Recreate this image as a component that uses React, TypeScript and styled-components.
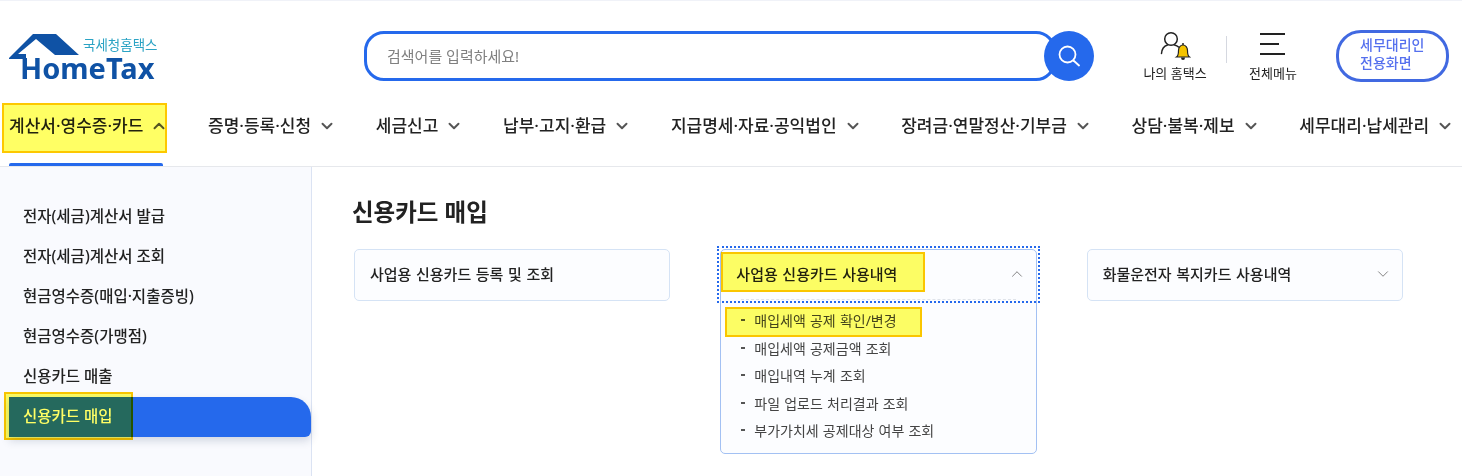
import React from 'react';
import styled, { createGlobalStyle } from 'styled-components';
import { ChevronDown, ChevronUp } from 'lucide-react';

const GlobalStyle = createGlobalStyle`
  html, body {
    margin: 0;
    padding: 0;
    background: #fff;
    overflow: hidden;
  }
  * {
    box-sizing: border-box;
  }
  body {
    font-family: "Noto Sans", "Noto Sans CJK KR", sans-serif;
    color: #222;
  }
`;

const Page = styled.div`
  position: relative;
  width: 1462px;
  height: 476px;
  overflow: hidden;
  border-top: 1px solid #f0f2f8;
`;

// top row: logo, search, utility links
const TopBar = styled.div`
  height: 101px;
  display: flex;
  align-items: flex-start;
  padding: 30px 13px 0 9px;
`;

const Logo = styled.a`
  position: relative;
  display: block;
  width: 149px;
  height: 50px;
  margin-top: 3px;
`;

const LogoRoof = styled.svg`
  position: absolute;
  left: 0;
  top: 0;
`;

const LogoSub = styled.span`
  position: absolute;
  left: 74px;
  top: 3px;
  font-size: 13.5px;
  line-height: 16px;
  color: #2ba3c4;
  white-space: nowrap;
`;

const LogoText = styled.span`
  position: absolute;
  left: 11px;
  top: 22px;
  font-weight: 700;
  font-size: 29px;
  line-height: 24px;
  color: #0f52a5;
  white-space: nowrap;
`;

const SearchBox = styled.form`
  display: flex;
  align-items: center;
  margin-left: 206px;
  margin-right: 49px;
`;

const SearchInput = styled.div`
  width: 692px;
  height: 50px;
  border: 3px solid #2569ec;
  border-radius: 20px;
  padding-left: 20px;
  padding-bottom: 2px;
  display: flex;
  align-items: center;
  font-size: 15px;
  color: #808080;
`;

const SearchButton = styled.button`
  width: 50px;
  height: 50px;
  margin-left: -12px;
  border: 0;
  padding: 0;
  border-radius: 50%;
  background: #2569ec;
  display: flex;
  align-items: center;
  justify-content: center;
`;

const UtilLink = styled.a<{ $width: number }>`
  width: ${({ $width }) => $width}px;
  height: 50px;
  display: flex;
  flex-direction: column;
  align-items: center;
  justify-content: space-between;
  font-size: 13px;
  line-height: 16px;
  color: #222;
  white-space: nowrap;
`;

const UtilDivider = styled.span`
  width: 1px;
  height: 27px;
  margin: 5px 22px 0 19px;
  background: #d5d8e0;
`;

const BellIcon = styled.svg`
  flex: none;
`;

const MenuIcon = styled.svg`
  flex: none;
  margin-top: 2px;
`;

const AgentButton = styled.a`
  width: 113px;
  height: 52px;
  margin-left: 39px;
  margin-top: -1px;
  border: 3px solid #4169e1;
  border-radius: 25px;
  padding: 3px 0 0 21px;
  font-size: 14px;
  font-weight: 500;
  line-height: 18px;
  color: #5570ee;
`;

// main menu
const Nav = styled.nav`
  position: relative;
  height: 65px;
  display: flex;
  align-items: flex-start;
  gap: 39.7px;
  padding: 11px 0 0 9px;
  border-bottom: 1px solid #e6e8ec;
`;

const NavItem = styled.a`
  display: flex;
  align-items: center;
  gap: 7px;
  font-size: 17px;
  font-weight: 500;
  line-height: 26px;
  color: #222;
  white-space: nowrap;
  svg {
    color: #555;
    flex: none;
  }
`;

const NavUnderline = styled.span`
  position: absolute;
  left: 9px;
  bottom: 0;
  width: 154px;
  height: 3px;
  border-radius: 2px 2px 0 0;
  background: #2569ec;
`;

const Main = styled.div`
  display: flex;
  height: 309px;
`;

const Sidebar = styled.aside`
  width: 312px;
  padding: 30px 0 0 9px;
  background: #f9fafe;
  border-right: 1px solid #dbe3f3;
`;

const SideItem = styled.a<{ $active?: boolean }>`
  display: flex;
  align-items: center;
  height: 40px;
  padding: 0 0 3px 14px;
  font-size: 15.5px;
  font-weight: 500;
  white-space: nowrap;
  color: ${({ $active }) => ($active ? '#fff' : '#222')};
  background: ${({ $active }) => ($active ? '#2569ec' : 'transparent')};
  border-radius: ${({ $active }) => ($active ? '0 20px 6px 0' : '0')};
  box-shadow: ${({ $active }) => ($active ? '0 4px 8px rgba(40, 60, 100, 0.18)' : 'none')};
`;

const Content = styled.section`
  flex: 1;
  padding: 29px 0 0 40px;
`;

const Title = styled.h2`
  margin: 0 0 21px;
  font-size: 23.5px;
  font-weight: 700;
  line-height: 32px;
  color: #222;
`;

const CardRow = styled.div`
  display: flex;
  align-items: flex-start;
  gap: 50px;
  padding-left: 2px;
`;

const Card = styled.div<{ $open?: boolean }>`
  position: relative;
  width: 316.33px;
  border: 1px solid ${({ $open }) => ($open ? '#a3c1f3' : '#d5e3f5')};
  border-radius: 5px;
  background: #fcfdff;
`;

const CardHead = styled.div`
  position: relative;
  height: 50px;
  display: flex;
  align-items: center;
  justify-content: space-between;
  padding: 0 10px 3px 15px;
  font-size: 15px;
  font-weight: 500;
  word-spacing: 0.7px;
  color: #222;
  svg {
    color: #777;
  }
`;

const HeadRule = styled.span`
  position: absolute;
  left: 20px;
  right: 20px;
  bottom: 0;
  border-bottom: 1px dashed #dfe3ea;
`;

const FocusRing = styled.span`
  position: absolute;
  left: -4px;
  right: -4px;
  top: -4px;
  height: 57px;
  border: 2px dotted #2569ec;
  pointer-events: none;
`;

const SubList = styled.ul`
  list-style: none;
  margin: 0;
  padding: 7px 0 8px 20px;
`;

const SubItem = styled.li`
  position: relative;
  height: 27.5px;
  padding-left: 13px;
  font-size: 14px;
  line-height: 27px;
  word-spacing: 0.5px;
  color: #444;
  white-space: nowrap;
  &::before {
    content: '';
    position: absolute;
    left: 0;
    top: 12px;
    width: 4px;
    height: 2px;
    background: #555;
  }
`;

// yellow marker boxes someone drew over the capture
const Marker = styled.span<{ $x: number; $y: number; $w: number; $h: number }>`
  position: absolute;
  left: ${({ $x }) => $x}px;
  top: ${({ $y }) => $y}px;
  width: ${({ $w }) => $w}px;
  height: ${({ $h }) => $h}px;
  background: #ffff64;
  border: 2px solid #fdc800;
  mix-blend-mode: multiply;
  pointer-events: none;
`;

const UserBell = () => (
  <BellIcon width="31" height="30" viewBox="0 0 31 30" fill="none">
    <circle cx="11" cy="8" r="6.300" stroke="#222" strokeWidth="1.500" />
    <path d="M1.500 22.500c.3-4.500 3-7.500 6-8.500" stroke="#222" strokeWidth="1.500" strokeLinecap="round" />
    <path d="M14.500 14c1.500.4 3 1 4 2" stroke="#222" strokeWidth="1.500" strokeLinecap="round" />
    <path
      d="M16.500 26c1.500-1 2-2.500 2-6.500 0-3 2-5.500 4.500-5.500s4.500 2.500 4.500 5.500c0 4 .5 5.500 2 6.500z"
      fill="#f5c400"
      stroke="#222"
      strokeWidth="1.200"
    />
    <path d="M21 26.500a2 2.500 0 0 0 4 0z" fill="#222" />
    <path d="M23 12v2" stroke="#222" strokeWidth="1.500" />
  </BellIcon>
);

const MenuLines = () => (
  <MenuIcon width="26" height="22" viewBox="0 0 26 22" fill="none" stroke="#222" strokeWidth="2">
    <path d="M0 1h25M0 11h19M0 21h25" />
  </MenuIcon>
);

const NAV_ITEMS = [
  '계산서·영수증·카드',
  '증명·등록·신청',
  '세금신고',
  '납부·고지·환급',
  '지급명세·자료·공익법인',
  '장려금·연말정산·기부금',
  '상담·불복·제보',
  '세무대리·납세관리',
];

const SIDE_ITEMS = [
  '전자(세금)계산서 발급',
  '전자(세금)계산서 조회',
  '현금영수증(매입·지출증빙)',
  '현금영수증(가맹점)',
  '신용카드 매출',
  '신용카드 매입',
];

const SUB_ITEMS = [
  '매입세액 공제 확인/변경',
  '매입세액 공제금액 조회',
  '매입내역 누계 조회',
  '파일 업로드 처리결과 조회',
  '부가가치세 공제대상 여부 조회',
];

export default function App() {
  return (
    <Page>
      <GlobalStyle />
      <TopBar>
        <Logo>
          <LogoRoof width="72" height="26" viewBox="0 0 72 26">
            <path d="M0 24 24 0h23l23 21H46L27 5 9 20h8v5H0z" fill="#0f52a5" />
          </LogoRoof>
          <LogoSub>국세청홈택스</LogoSub>
          <LogoText>HomeTax</LogoText>
        </Logo>
        <SearchBox>
          <SearchInput>검색어를 입력하세요!</SearchInput>
          <SearchButton type="button" aria-label="검색">
            <svg width="22" height="22" viewBox="0 0 22 22" fill="none" stroke="#fff" strokeWidth="1.800">
              <circle cx="9.500" cy="9.500" r="8" />
              <path d="M15.500 15.500l5.500 5" strokeLinecap="round" />
            </svg>
          </SearchButton>
        </SearchBox>
        <UtilLink $width={64}>
          <UserBell />
          나의 홈택스
        </UtilLink>
        <UtilDivider />
        <UtilLink $width={48}>
          <MenuLines />
          전체메뉴
        </UtilLink>
        <AgentButton>
          세무대리인
          <br />
          전용화면
        </AgentButton>
      </TopBar>
      <Nav>
        {NAV_ITEMS.map((label, i) => (
          <NavItem key={label}>
            {label}
            {i === 0 ? <ChevronUp size={18} strokeWidth={2.6} /> : <ChevronDown size={18} strokeWidth={2.6} />}
          </NavItem>
        ))}
        <NavUnderline />
      </Nav>
      <Main>
        <Sidebar>
          {SIDE_ITEMS.map((label, i) => (
            <SideItem key={label} $active={i === SIDE_ITEMS.length - 1}>
              {label}
            </SideItem>
          ))}
        </Sidebar>
        <Content>
          <Title>신용카드 매입</Title>
          <CardRow>
            <Card>
              <CardHead>사업용 신용카드 등록 및 조회</CardHead>
            </Card>
            <Card $open>
              <CardHead>
                사업용 신용카드 사용내역
                <ChevronUp size={18} strokeWidth={1.2} />
                <HeadRule />
              </CardHead>
              <FocusRing />
              <SubList>
                {SUB_ITEMS.map((label) => (
                  <SubItem key={label}>{label}</SubItem>
                ))}
              </SubList>
            </Card>
            <Card>
              <CardHead>
                화물운전자 복지카드 사용내역
                <ChevronDown size={18} strokeWidth={1.2} />
              </CardHead>
            </Card>
          </CardRow>
        </Content>
      </Main>
      <Marker $x={2} $y={102} $w={165} $h={50} />
      <Marker $x={4} $y={391} $w={129} $h={48} />
      <Marker $x={721} $y={251} $w={204} $h={40} />
      <Marker $x={725} $y={306} $w={197} $h={30} />
    </Page>
  );
}
